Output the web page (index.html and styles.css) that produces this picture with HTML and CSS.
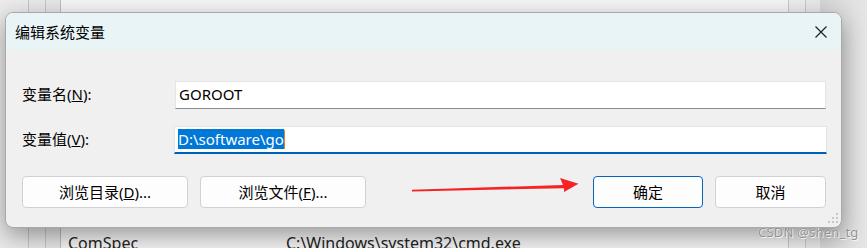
FILE: index.html
```html
<!DOCTYPE html>
<html lang="zh-CN">
<head>
    <meta charset="UTF-8">
    <meta name="viewport" content="width=device-width, initial-scale=1.0">
    <title>编辑系统变量</title>
    <link rel="stylesheet" href="styles.css">
</head>
<body>
    <div class="screen">
        <div class="dialog">
            <div class="titlebar">
                <span class="title">编辑系统变量</span>
                <svg class="close" width="12" height="12" viewBox="0 0 12 12">
                    <path d="M0.5 0.5 L11.5 11.5 M11.5 0.5 L0.5 11.5" stroke="#1a1a1a" stroke-width="1.1" fill="none"/>
                </svg>
            </div>
            <div class="content">
                <div class="field">
                    <label>变量名(<u>N</u>):</label>
                    <div class="input">GOROOT</div>
                </div>
                <div class="field">
                    <label>变量值(<u>V</u>):</label>
                    <div class="input focused"><span class="sel">D:\software\go</span><span class="caret"></span></div>
                </div>
                <div class="buttons">
                    <button>浏览目录(<u>D</u>)...</button>
                    <button>浏览文件(<u>F</u>)...</button>
                    <span class="spacer"></span>
                    <button class="primary">确定</button>
                    <button class="cancel">取消</button>
                </div>
            </div>
            <svg class="grip" width="12" height="12" viewBox="0 0 12 12">
                <rect x="9" y="0" width="2" height="2"/>
                <rect x="5" y="4" width="2" height="2"/>
                <rect x="9" y="4" width="2" height="2"/>
                <rect x="1" y="8" width="2" height="2"/>
                <rect x="5" y="8" width="2" height="2"/>
                <rect x="9" y="8" width="2" height="2"/>
            </svg>
        </div>
        <div class="list-row">
            <span class="name">ComSpec</span>
            <span class="value">C:\Windows\system32\cmd.exe</span>
        </div>
    </div>

    <!-- red annotation arrow pointing at the OK button -->
    <svg class="arrow" width="180" height="25" viewBox="0 0 180 25">
        <polygon points="7,17.8 158,13 155,6 173.5,11.8 159,20 159,16.2 7,19.4" fill="#f52323"/>
    </svg>

    <div class="watermark">CSDN @shen_tg</div>
</body>
</html>
```

FILE: styles.css
```css
body {
    margin: 0;
    width: 867px;
    height: 248px;
    overflow: hidden;
    position: relative;
    font-family: "Noto Sans", "Noto Sans CJK SC", sans-serif;
    background-color: #ececec;
    background-image: linear-gradient(to right,
        #ebebeb 0 28px, #c6c6c6 28px 29px,
        #e9e9e9 29px 45px, #c6c6c6 45px 46px,
        #e7e7e7 46px 60px, #bcbcbc 60px 61px,
        #f5f5f5 61px 788px, #c9c9c9 788px 789px,
        #ededed 789px 805px, #c9c9c9 805px 806px,
        #e9e9e9 806px 820px, #d6d6d6 820px, #e6e6e6 867px);
}
.screen {
    padding: 12px 0 0 5px;
}
.dialog {
    position: relative;
    box-sizing: border-box;
    width: 837px;
    height: 216px;
    background-color: #f0f0f0;
    border: 1px solid #a9a9a9;
    border-radius: 8px;
    overflow: hidden;
    box-shadow: 0 8px 24px rgba(0, 0, 0, 0.38);
}
.titlebar {
    height: 37px;
    display: flex;
    align-items: center;
    justify-content: space-between;
    padding: 0 14px 0 9px;
    background-color: #e9f4f7;
}
.title {
    font-size: 15px;
    color: #000;
}
.close {
    display: block;
}
.content {
    padding: 31px 15px 0 16px;
}
.field {
    display: flex;
    align-items: center;
    margin-bottom: 17px;
}
.field label {
    width: 153px;
    padding-bottom: 3px;
    font-size: 15px;
    color: #000;
}
.input {
    flex: 1;
    box-sizing: border-box;
    height: 28px;
    padding: 0 0 2px 3px;
    display: flex;
    align-items: center;
    background-color: #fff;
    border: 1px solid #e4e4e4;
    border-bottom-color: #8a8a8a;
    font-size: 15px;
    color: #000;
}
.input.focused {
    border-bottom: 2px solid #005fb8;
    padding: 0 0 1px 3px;
    margin-left: -1px;
    margin-right: -1px;
}
.sel {
    background-color: #0078d7;
    color: #fff;
}
.caret {
    width: 1px;
    height: 19px;
    background-color: #e8822a;
}
.buttons {
    display: flex;
    gap: 12px;
    margin-top: 22px;
}
.buttons button {
    height: 32px;
    width: 166px;
    padding: 0 0 2px;
    font-family: inherit;
    font-size: 15px;
    color: #000;
    background-color: #fdfdfd;
    border: 1px solid #d2d2d2;
    border-radius: 4px;
}
.buttons .spacer {
    flex: 1;
}
.buttons .primary {
    width: 110px;
    border-color: #0067c0;
}
.buttons .cancel {
    width: 111px;
}
.grip {
    position: absolute;
    right: 2px;
    bottom: 2px;
    fill: #c6c6c6;
}
.list-row {
    display: flex;
    padding-top: 5px;
    font-size: 16px;
    line-height: 20px;
    color: #222;
}
.list-row .name {
    margin-left: 63px;
    width: 218px;
}
.arrow {
    position: absolute;
    left: 405px;
    top: 172px;
}
.watermark {
    position: absolute;
    left: 758px;
    top: 223px;
    font-size: 13px;
    color: rgba(130, 130, 130, 0.9);
    text-shadow: 0 0 1px #fff, 1px 1px 0 rgba(255, 255, 255, 0.7);
    letter-spacing: 0.2px;
}
```
